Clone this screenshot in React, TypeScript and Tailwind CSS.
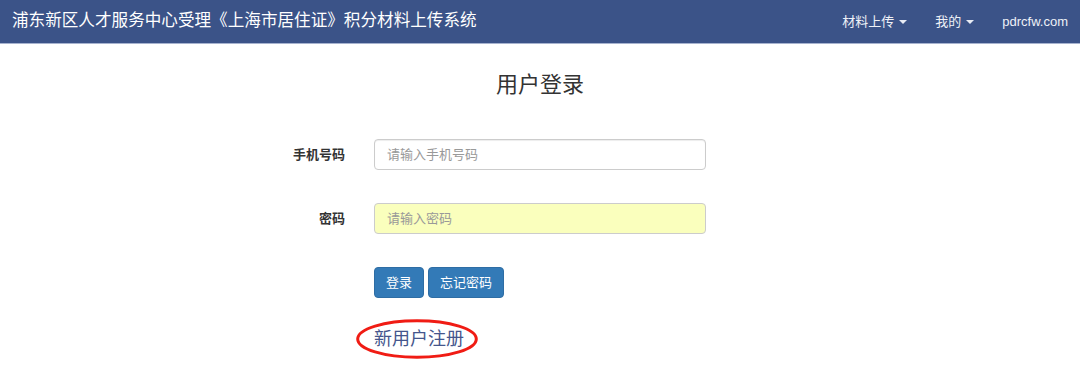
import { useState } from 'react';

const cjk = { fontFamily: '"Liberation Sans", "Noto Sans CJK SC", sans-serif' };

function Caret() {
  return <span className="ml-[5px] inline-block h-0 w-0 border-x-[4px] border-t-[4px] border-x-transparent border-t-[#e8ecf4] align-middle" />;
}

export default function App() {
  const [phone, setPhone] = useState('');
  const [password, setPassword] = useState('');

  return (
    <div className="min-h-[378px] w-full bg-white text-[#333]" style={cjk}>
      <nav className="flex h-[44px] items-center justify-between border-b border-[#a7b3cf] bg-[#3b5388] pl-[12px] pr-[12px]">
        <span className="text-[16.6px] text-white">浦东新区人才服务中心受理《上海市居住证》积分材料上传系统</span>
        <div className="flex items-center text-[13px] text-[#eef1f7]">
          <a className="flex items-center">材料上传<Caret /></a>
          <a className="ml-[28px] flex items-center">我的<Caret /></a>
          <a className="ml-[28px]">pdrcfw.com</a>
        </div>
      </nav>

      <h2 className="mt-[26px] text-center text-[22px] leading-[30px] font-normal text-[#333]">用户登录</h2>

      <div className="mt-[39px] grid grid-cols-[345px_332px] gap-x-[29px]">
        <label className="flex h-[31px] items-center justify-end text-[13px] font-bold text-[#333]">手机号码</label>
        <input
          value={phone}
          onChange={(e) => setPhone(e.target.value)}
          placeholder="请输入手机号码"
          className="h-[31px] rounded-[4px] border border-[#ccc] bg-white px-[12px] text-[13px] text-[#555] shadow-[inset_0_1px_1px_rgba(0,0,0,0.075)] outline-none placeholder:text-[#999]"
        />

        <label className="mt-[33px] flex h-[31px] items-center justify-end text-[13px] font-bold text-[#333]">密码</label>
        <input
          type="password"
          value={password}
          onChange={(e) => setPassword(e.target.value)}
          placeholder="请输入密码"
          className="mt-[33px] h-[31px] rounded-[4px] border border-[#ccc] bg-[#faffbd] px-[12px] text-[13px] text-[#555] outline-none placeholder:text-[#999]"
        />

        <div />
        <div className="mt-[33px] flex gap-[4px]">
          <button className="h-[31px] rounded-[4px] border border-[#2e6da4] bg-[#337ab7] px-[11px] text-[13px] text-white">登录</button>
          <button className="h-[31px] rounded-[4px] border border-[#2e6da4] bg-[#337ab7] px-[11px] text-[13px] text-white">忘记密码</button>
        </div>

        <div />
        <div className="mt-[28px]">
          <a className="relative inline-block text-[18px] leading-[26px] text-[#45568c]">
            新用户注册
            <svg className="absolute left-[-18px] top-[-7px]" width="122" height="40" viewBox="0 0 122 40" fill="none">
              <ellipse cx="61" cy="20" rx="59.3" ry="18.3" stroke="#f01c14" strokeWidth="3" />
            </svg>
          </a>
        </div>
      </div>
    </div>
  );
}
